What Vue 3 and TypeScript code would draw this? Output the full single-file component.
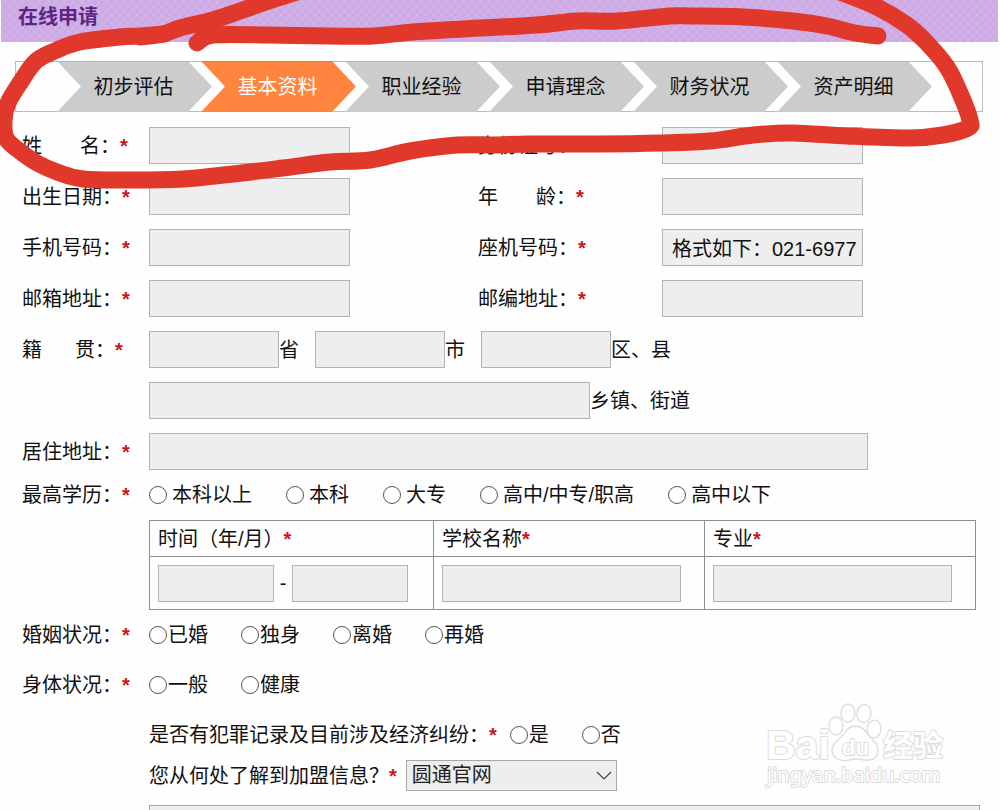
<script setup lang="ts">
import { ref } from 'vue'

interface Field {
  id: string
  label: string
  spread?: boolean
  value?: string
}

const steps = ['初步评估', '基本资料', '职业经验', '申请理念', '财务状况', '资产明细']
const current = ref(1)

const pairs = ref<Field[][]>([
  [{ id: 'name', label: '姓名', spread: true }, { id: 'idno', label: '身份证号' }],
  [{ id: 'birth', label: '出生日期' }, { id: 'age', label: '年龄', spread: true }],
  [{ id: 'mobile', label: '手机号码' }, { id: 'phone', label: '座机号码', value: '格式如下：021-6977' }],
  [{ id: 'email', label: '邮箱地址' }, { id: 'zip', label: '邮编地址' }],
])

const degrees = ['本科以上', '本科', '大专', '高中/中专/职高', '高中以下']
const choices = [
  { name: 'marriage', label: '婚姻状况', options: ['已婚', '独身', '离婚', '再婚'] },
  { name: 'health', label: '身体状况', options: ['一般', '健康'] },
]
const source = ref('圆通官网')

type Point = [number, number]

const strokes: Point[][] = [
  [
    [310, -12], [275, -1], [243, 10], [213, 20], [180, 28], [163, 34], [140, 37],
  ],
  [
    [164, 34], [140, 36], [120, 37], [80, 42], [57, 50], [36, 61], [20, 83], [8, 103], [4, 120], [6, 138],
    [17, 149], [37, 163], [57, 172], [83, 179], [133, 180], [183, 179], [233, 174], [283, 168], [330, 162],
    [370, 160], [410, 151], [457, 145], [497, 145], [530, 144], [600, 144], [660, 143], [710, 141], [753, 135],
    [793, 133], [847, 136], [910, 138], [943, 135], [968, 128], [970, 120], [960, 93], [947, 67], [927, 43],
    [907, 25], [877, 7], [840, -8],
  ],
  [
    [197, 43], [213, 35], [267, 35], [330, 36], [373, 36], [413, 32], [463, 29], [537, 25], [577, 21], [617, 21],
    [670, 16], [693, 16], [743, 17], [793, 21], [827, 26], [855, 33], [878, 36],
  ],
]

// Smooth curve through every point (Catmull-Rom written as cubic Béziers).
function smooth(p: Point[]): string {
  let d = `M${p[0][0]} ${p[0][1]}`
  for (let i = 0; i < p.length - 1; i++) {
    const a = p[Math.max(i - 1, 0)]
    const b = p[i]
    const c = p[i + 1]
    const e = p[Math.min(i + 2, p.length - 1)]
    d += `C${b[0] + (c[0] - a[0]) / 6} ${b[1] + (c[1] - a[1]) / 6} ${c[0] - (e[0] - b[0]) / 6} ${c[1] - (e[1] - b[1]) / 6} ${c[0]} ${c[1]}`
  }
  return d
}
</script>

<template>
  <main class="page">
    <header class="banner"><h1>在线申请</h1></header>

    <ol class="steps">
      <li v-for="(s, i) in steps" :key="s" :class="{ active: i === current }">{{ s }}</li>
    </ol>

    <form class="form" @submit.prevent>
      <div v-for="(row, r) in pairs" :key="r" class="row pair">
        <template v-for="f in row" :key="f.id">
          <label class="label" :for="f.id">
            <span v-if="f.spread" class="spread"><span>{{ f.label[0] }}</span><span>{{ f.label[1] }}：</span></span>
            <span v-else>{{ f.label }}：</span>
            <b class="req">*</b>
          </label>
          <div class="cell"><input :id="f.id" v-model="f.value" class="box" type="text" /></div>
        </template>
      </div>

      <div class="row">
        <label class="label" for="province">
          <span class="spread narrow"><span>籍</span><span>贯：</span></span><b class="req">*</b>
        </label>
        <div class="inline origin">
          <span class="unit"><input id="province" class="box" type="text" /><label for="province">省</label></span>
          <span class="unit"><input id="city" class="box" type="text" /><label for="city">市</label></span>
          <span class="unit"><input id="county" class="box" type="text" /><label for="county">区、县</label></span>
        </div>
      </div>

      <div class="row">
        <span class="label"></span>
        <div class="inline"><input id="street" class="box street" type="text" /><label for="street">乡镇、街道</label></div>
      </div>

      <div class="row last">
        <label class="label" for="home"><span>居住地址：</span><b class="req">*</b></label>
        <div class="cell"><input id="home" class="box home" type="text" /></div>
      </div>

      <div class="row choice" role="radiogroup" aria-labelledby="degree-label">
        <span id="degree-label" class="label"><span>最高学历：</span><b class="req">*</b></span>
        <div class="options roomy">
          <label v-for="d in degrees" :key="d"><input type="radio" name="degree" :value="d" />{{ d }}</label>
        </div>
      </div>

      <table class="schools">
        <colgroup><col class="period" /><col /><col /></colgroup>
        <thead>
          <tr>
            <th>时间（年/月）<b class="req">*</b></th>
            <th>学校名称<b class="req">*</b></th>
            <th>专业<b class="req">*</b></th>
          </tr>
        </thead>
        <tbody>
          <tr>
            <td>
              <div class="range">
                <input class="box" type="text" aria-label="开始时间" /><span>-</span><input class="box" type="text" aria-label="结束时间" />
              </div>
            </td>
            <td><input class="box wide" type="text" aria-label="学校名称" /></td>
            <td><input class="box wide" type="text" aria-label="专业" /></td>
          </tr>
        </tbody>
      </table>

      <div v-for="c in choices" :key="c.name" class="row choice" role="radiogroup" :aria-labelledby="c.name">
        <span :id="c.name" class="label"><span>{{ c.label }}：</span><b class="req">*</b></span>
        <div class="options">
          <label v-for="o in c.options" :key="o"><input type="radio" :name="c.name" :value="o" />{{ o }}</label>
        </div>
      </div>

      <div class="extra">
        <div class="question" role="radiogroup" aria-labelledby="record">
          <span id="record" class="ask">是否有犯罪记录及目前涉及经济纠纷：<b class="req">*</b></span>
          <div class="options">
            <label><input type="radio" name="record" value="是" />是</label>
            <label><input type="radio" name="record" value="否" />否</label>
          </div>
        </div>
        <div class="heard">
          <label for="source" class="ask">您从何处了解到加盟信息？<b class="req">*</b></label>
          <span class="select">
            <select id="source" v-model="source"><option>圆通官网</option></select>
            <svg viewBox="0 0 16 9" width="16" height="9" aria-hidden="true"><path d="M1 1 8 8 15 1" fill="none" stroke="#444" stroke-width="1.2" /></svg>
          </span>
        </div>
        <textarea class="box notes" aria-label="补充说明"></textarea>
      </div>
    </form>

    <svg class="marker" viewBox="0 0 1000 200" aria-hidden="true">
      <g fill="none" stroke="#e0382b" stroke-width="17" stroke-linecap="round" stroke-linejoin="round">
        <path v-for="(s, i) in strokes" :key="i" :d="smooth(s)" />
      </g>
    </svg>

    <svg class="watermark" viewBox="0 0 190 94" width="190" height="94" role="img" aria-label="Baidu 经验">
      <g fill="#fff" stroke="#dcdcdc" stroke-width="1.3" stroke-linejoin="round">
        <text x="4" y="61" class="latin">Bai</text>
        <ellipse cx="74" cy="28" rx="7" ry="9" />
        <ellipse cx="86" cy="15" rx="7" ry="9" />
        <ellipse cx="102" cy="15.500" rx="7" ry="9" transform="rotate(10 102 15)" />
        <ellipse cx="112" cy="31" rx="7" ry="9" transform="rotate(8 112 31)" />
        <path d="M93 28Q100 28 105 35C108 41 116 44 116 52 116 61 109 63 102 62Q94 60 87 62C78 64 70 60 70 52 70 44 79 41 83 35Q87 28 93 28Z" />
        <text x="80" y="57" class="du">du</text>
        <text x="121" y="58" class="cjk">经验</text>
        <text x="5" y="84" class="url">jingyan.baidu.com</text>
      </g>
    </svg>
  </main>
</template>

<style>
body {
  margin: 0;
  background: #fefefe;
}
</style>

<style scoped>
.page {
  position: relative;
  height: 100vh;
  overflow: hidden;
  font: 20px/24px "Liberation Sans", "Noto Sans CJK SC", sans-serif;
  color: #111;
}

.page * {
  box-sizing: border-box;
}

.banner {
  height: 42px;
  margin: 0 2px 0 1px;
  padding: 5px 17px;
  background:
    repeating-linear-gradient(45deg, rgba(255, 255, 255, 0.07) 0 2px, transparent 2px 6px),
    repeating-linear-gradient(-45deg, rgba(150, 100, 190, 0.07) 0 2px, transparent 2px 6px),
    #cfade6;
}

.banner h1 {
  margin: 0;
  font-size: 20px;
  line-height: 24px;
  font-weight: 700;
  color: #5c2484;
}

.steps {
  display: flex;
  height: 51px;
  margin: 19px 17px 0 15px;
  padding: 0 50px 0 52px;
  border: 1px solid #bbb;
  list-style: none;
}

.steps li {
  flex: 1;
  display: flex;
  align-items: center;
  justify-content: center;
  margin: -1px 0 -1px -11px;
  padding-right: 2px;
  border-top: 1px solid #d3ab98;
  background: #ccc;
  clip-path: polygon(0 0, calc(100% - 24px) 0, 100% 50%, calc(100% - 24px) 100%, 0 100%, 24px 50%);
}

.steps .active {
  background: #ff843d;
  border-color: #e07a40;
  color: #fff;
}

.form {
  margin-top: 15px;
  padding: 0 20px 0 22px;
}

.row {
  display: grid;
  grid-template-columns: 127px minmax(0, 1fr);
  align-items: center;
  margin-bottom: 14px;
}

.pair {
  grid-template-columns: 127px minmax(0, 329fr) minmax(0, 184fr) minmax(0, 318fr);
}

.label {
  display: flex;
  white-space: nowrap;
}

.spread {
  display: flex;
  gap: 38px;
}

.narrow {
  gap: 33px;
}

.req {
  color: #c8161d;
}

.cell {
  display: flex;
}

.box {
  width: 201px;
  max-width: 100%;
  height: 37px;
  margin: 0;
  padding: 0 2px 0 9px;
  border: 1px solid #b4b4b4;
  border-radius: 0;
  background: #eee;
  font: inherit;
  color: inherit;
  outline: none;
}

.inline,
.unit {
  display: flex;
  align-items: center;
}

.origin {
  gap: 16px;
}

.origin .box {
  width: 130px;
}

.inline .street {
  width: 441px;
}

.home {
  width: 719px;
}

.last {
  margin-bottom: 0;
}

.choice {
  height: 50px;
  margin-bottom: 0;
}

.options {
  display: flex;
  gap: 33px;
}

.options label {
  display: flex;
  align-items: center;
  gap: 1px;
  white-space: nowrap;
}

.roomy {
  gap: 34px;
}

.roomy label {
  gap: 5px;
}

.options input {
  appearance: none;
  width: 18px;
  height: 18px;
  margin: 0;
  border: 1px solid #555;
  border-radius: 50%;
  background: #fff;
}

.options input:checked {
  background: radial-gradient(#333 4px, #fff 5px);
}

.schools {
  width: calc(100% - 131px);
  margin-left: 127px;
  border-collapse: collapse;
  table-layout: fixed;
}

.schools .period {
  width: 284px;
}

.schools th,
.schools td {
  border: 1px solid #8f8f8f;
  padding: 0 8px;
  text-align: left;
  font-weight: 400;
}

.schools th {
  height: 36px;
}

.schools td {
  height: 53px;
}

.schools .box {
  display: block;
}

.range {
  display: flex;
  align-items: center;
}

.range .box {
  width: 116px;
}

.range span {
  width: 18px;
  text-align: center;
}

.schools .wide {
  width: 239px;
}

.extra {
  margin-left: 127px;
}

.question {
  display: flex;
  align-items: center;
  gap: 13px;
  height: 50px;
}

.ask {
  display: flex;
  white-space: nowrap;
}

.heard {
  display: flex;
  align-items: center;
  gap: 9px;
}

.select {
  position: relative;
  display: flex;
}

.select select {
  appearance: none;
  width: 211px;
  height: 31px;
  padding: 0 24px 2px 5px;
  border: 1px solid #a8a8a8;
  border-radius: 0;
  background: #eee;
  font: inherit;
  color: #222;
}

.select svg {
  position: absolute;
  right: 5px;
  top: 11px;
  pointer-events: none;
}

.notes {
  display: block;
  width: 100%;
  height: 74px;
  margin-top: 14px;
  border-color: #a8a8a8;
  resize: none;
}

.marker {
  position: absolute;
  top: 0;
  left: 0;
  width: 100%;
  pointer-events: none;
}

.watermark {
  position: absolute;
  right: 48px;
  bottom: 18px;
  pointer-events: none;
}

.watermark text {
  paint-order: stroke;
  stroke-width: 2px;
}

.latin {
  font: 700 41px "Liberation Sans", sans-serif;
}

.du {
  font: 700 22px "Liberation Sans", sans-serif;
}

.cjk {
  font: 700 30px "Noto Sans CJK SC", sans-serif;
}

.url {
  font: 20px "Noto Sans", sans-serif;
}
</style>
